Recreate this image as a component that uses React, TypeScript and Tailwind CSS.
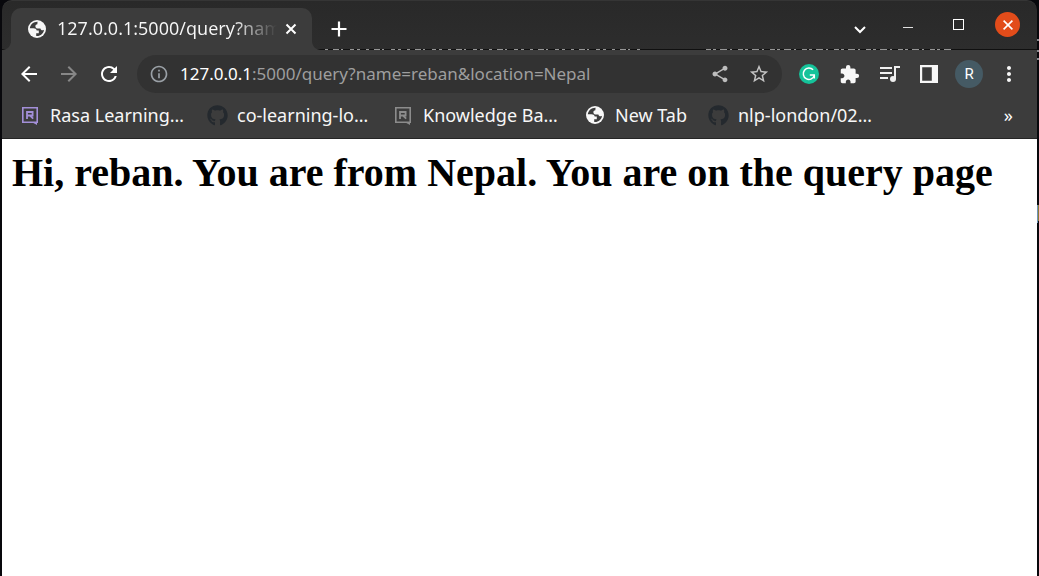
import React from "react";
import { MdArrowBack, MdArrowForward, MdRefresh, MdInfoOutline, MdShare, MdStarBorder, MdExtension, MdMoreVert } from "react-icons/md";
import { FaGithub } from "react-icons/fa";

function Globe() {
  return (
    <svg viewBox="0 0 20 20" className="size-5 shrink-0" aria-hidden="true">
      <circle cx="10" cy="10" r="9" fill="#f7f7f7" />
      <path
        fill="#3c3c3c"
        d="M10.6 2.8C6.8 2.6 3.3 5.4 2.8 9.3h3.7c1.8 0 2.9.8 3.2 2.3h2.1v2.6H9.2v2.7c3.9.5 7.4-2.3 7.9-6.2-.7.6-1.5.8-2.4.5-.8-.3-1.2-.9-1.3-1.7h-3.2c-1.3-.3-1.9-1.2-1.8-2.5.1-1.1.8-1.7 2-1.8V4.2z"
      />
    </svg>
  );
}

function Rasa({ className }: { className: string }) {
  return (
    <svg viewBox="0 0 16 18" className={"mt-[2px] h-[18px] w-4 shrink-0 " + className} fill="none" stroke="currentColor" aria-hidden="true">
      <path strokeWidth="1.6" d="M.8.8h14.4v14.4H.8z" />
      <path fill="currentColor" stroke="none" d="M9.5 15H15v3z" />
      <path strokeWidth="1.8" d="M5 12V5h5.6v3.5H5M8 8.7l3.2 3" />
    </svg>
  );
}

function Github() {
  return <FaGithub className="size-[21px] shrink-0 text-[#24292e]" aria-hidden="true" />;
}

const bookmarks = [
  { label: "Rasa Learning…", icon: <Rasa className="text-[#a38fd8]" />, box: "w-[185px] gap-3 pl-[20px]" },
  { label: "co-learning-lo…", icon: <Github />, box: "w-[188px] gap-[9px] pl-5" },
  { label: "Knowledge Ba…", icon: <Rasa className="text-[#8c8c8c]" />, box: "w-[188px] gap-3 pl-[20px]" },
  { label: "New Tab", icon: <Globe />, box: "w-[124px] gap-[10px] pl-[22px]" },
  { label: "nlp-london/02…", icon: <Github />, box: "w-[191px] gap-[9px] pl-[21px]" },
];

function TitleBar() {
  return (
    <header className="relative flex h-[50px] rounded-t-[10px] border-t border-[#353535] bg-linear-to-b from-[#292929] to-[#2d2d2d] pl-[9px]">
      <svg className="absolute bottom-0 left-0 h-[2px] w-full" aria-hidden="true">
        <rect y="1" width="100%" height="1" fill="#101010" />
        <line x1="323" x2="638" y1="1.5" y2="1.5" stroke="#969696" strokeDasharray="3 5 6 2 2 7 4 3 3 6" />
        <line x1="704" x2="952" y1="1.5" y2="1.5" stroke="#969696" strokeDasharray="5 2 3 4 7 3 2 6" />
      </svg>
      <svg viewBox="0 0 9 9" className="absolute bottom-0 left-0 size-[9px]" aria-hidden="true">
        <path fill="#3c3c3c" d="M9 0v9H0c5 0 9-4 9-9z" />
      </svg>
      <div className="relative mt-[7px] flex h-[42px] w-[301px] items-center rounded-t-[10px] bg-[#3c3c3c] pl-4">
        <Globe />
        <span className="ml-[10px] w-[220px] whitespace-nowrap bg-linear-to-r from-[#f7f7f7] from-80% to-transparent bg-clip-text pb-[2px] text-lg leading-6 text-transparent">
          127.0.0.1:5000/query?nam
        </span>
        <button type="button" aria-label="Close tab" className="ml-1 grid size-5 place-items-center">
          <svg viewBox="0 0 12 12" className="size-3" stroke="#fff" strokeWidth="2" aria-hidden="true">
            <path d="M1.5 1.5l9 9m0-9l-9 9" />
          </svg>
        </button>
        <svg viewBox="0 0 9 9" className="absolute bottom-0 left-full size-[9px]" aria-hidden="true">
          <path fill="#3c3c3c" d="M0 0v9h9C4 9 0 5 0 0z" />
        </svg>
      </div>
      <button type="button" aria-label="New tab" className="ml-[17px] mt-[18px] grid size-5 place-items-center">
        <svg viewBox="0 0 16 16" className="size-4" stroke="#fff" strokeWidth="2.2" aria-hidden="true">
          <path d="M8 .5v15M.5 8h15" />
        </svg>
      </button>
      <div className="ml-auto flex h-[47px] items-center pr-[17px]">
        <button type="button" aria-label="Search tabs" className="mr-6 mt-[10px] grid size-6 place-items-center">
          <svg viewBox="0 0 12 8" className="h-2 w-3" fill="none" stroke="#fff" strokeWidth="2" aria-hidden="true">
            <path d="M1 1l5 5 5-5" />
          </svg>
        </button>
        <button type="button" aria-label="Minimize" className="mr-[26px] mt-[6px] grid size-6 place-items-center">
          <span className="h-px w-[10px] bg-[#e0e0e0]" />
        </button>
        <button type="button" aria-label="Maximize" className="mr-[25px] grid size-6 place-items-center">
          <span className="size-[11px] border border-white" />
        </button>
        <button type="button" aria-label="Close window" className="grid size-[25px] place-items-center rounded-full bg-[#e24c1a]">
          <svg viewBox="0 0 10 10" className="size-[10px]" stroke="#fff" strokeWidth="1.6" aria-hidden="true">
            <path d="M.6.6l8.8 8.8m0-8.8L.6 9.4" />
          </svg>
        </button>
      </div>
    </header>
  );
}

function Toolbar() {
  return (
    <div className="flex h-12 items-center bg-[#3c3c3c] pl-[15px] pr-4">
      <button type="button" aria-label="Back" className="mr-4 text-white"><MdArrowBack className="size-6" /></button>
      <button type="button" aria-label="Forward" className="mr-4 text-[#878787]"><MdArrowForward className="size-6" /></button>
      <button type="button" aria-label="Reload" className="mr-4 text-white"><MdRefresh className="size-6" /></button>
      <div className="flex h-[38px] min-w-0 flex-1 items-center rounded-full bg-[#323232] px-3">
        <MdInfoOutline className="size-5 shrink-0 text-[#9aa0a6]" aria-hidden="true" />
        <div className="ml-[11px] flex-1 whitespace-nowrap text-[17px] leading-6 text-[#9e9e9e]">
          <span className="text-white">127.0.0.1</span>:5000/query?name=reban&amp;location=Nepal
        </div>
        <button type="button" aria-label="Share" className="mr-[18px] text-[#bdbdbd]"><MdShare className="size-5" /></button>
        <button type="button" aria-label="Bookmark this page" className="text-[#c4c4c4]"><MdStarBorder className="size-[22px]" /></button>
      </div>
      <button type="button" aria-label="Grammarly" className="ml-[17px] mr-5">
        <svg viewBox="0 0 20 20" className="size-5" fill="none" stroke="#fff" aria-hidden="true">
          <circle cx="10" cy="10" r="10" fill="#15c39a" stroke="none" />
          <path strokeWidth="1.5" d="M14.1 5.8a5.7 5.7 0 1 0 1.2 6" />
          <path strokeWidth="1.5" d="M10.8 11.1h4.5v3.5" />
        </svg>
      </button>
      <button type="button" aria-label="Extensions" className="mr-5 text-[#f7f7f7]"><MdExtension className="size-[21px]" /></button>
      <button type="button" aria-label="Media controls" className="mr-5">
        <svg viewBox="0 0 20 16" className="h-4 w-5" fill="none" stroke="#f0f0f0" strokeWidth="2" aria-hidden="true">
          <path d="M0 2h12M0 7h12M0 12h8M15 13V1h5" />
          <circle cx="13" cy="13" r="3" fill="#f0f0f0" stroke="none" />
        </svg>
      </button>
      <button type="button" aria-label="Side panel" className="mr-[17px]">
        <svg viewBox="0 0 18 18" className="size-[18px]" aria-hidden="true">
          <path fill="#f7f7f7" fillRule="evenodd" d="M0 0h18v18H0zM2.2 2.2v13.6h9.6V2.2z" />
        </svg>
      </button>
      <button type="button" aria-label="Profile" className="mr-[14px] size-7 rounded-full bg-[#455a64] font-[Roboto] text-[15px] leading-7 text-white">R</button>
      <button type="button" aria-label="Menu" className="text-[#f7f7f7]"><MdMoreVert className="size-6" /></button>
    </div>
  );
}

export default function App() {
  return (
    <div className="relative flex min-h-screen bg-[#08080c] px-[2px] font-['Noto_Sans',sans-serif]">
      <div className="flex min-w-0 flex-1 flex-col">
        <TitleBar />
        <Toolbar />
        <nav aria-label="Bookmarks" className="flex h-[41px] items-center border-b border-[#252525] bg-[#3c3c3c] pb-[6px]">
          {bookmarks.map((b) => (
            <a key={b.label} href="#" className={"flex items-center whitespace-nowrap text-lg leading-6 text-[#f7f7f7] " + b.box}>
              {b.icon}
              <span>{b.label}</span>
            </a>
          ))}
          <button type="button" aria-label="More bookmarks" className="ml-auto mr-6 text-lg leading-6 text-white">»</button>
        </nav>
        <main className="flex-1 bg-white px-[10px] py-3">
          <h1 className="font-['Liberation_Serif',serif] text-[40px] font-bold leading-[44px] text-black">
            Hi, reban. You are from Nepal. You are on the query page
          </h1>
        </main>
      </div>
      <svg className="absolute right-0 top-0 h-56 w-[2px]" aria-hidden="true">
        <path stroke="#8a8a90" strokeWidth="2" d="M0 40h2M0 51h2M0 59h2" />
        <rect y="205" width="1" height="18" fill="#6f93b8" />
        <rect x="1" y="205" width="1" height="16" fill="#8a7a35" />
      </svg>
    </div>
  );
}
